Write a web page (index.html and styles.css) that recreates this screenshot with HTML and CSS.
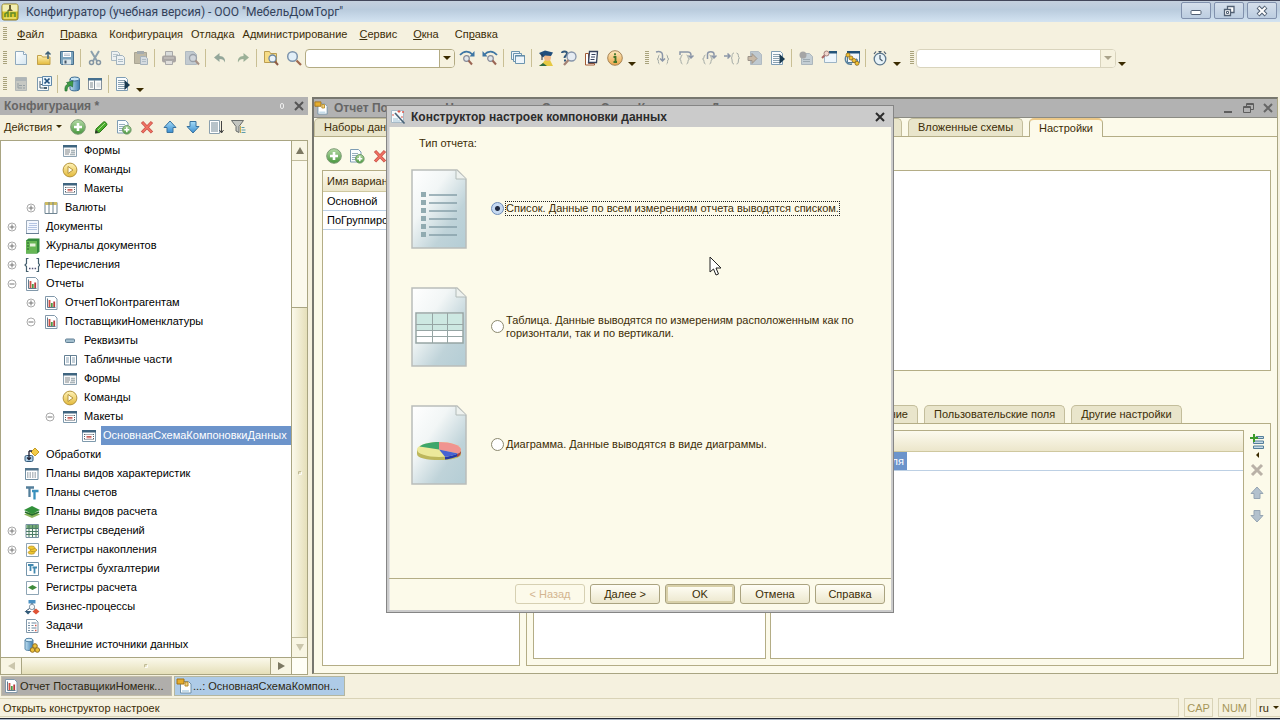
FILE: index.html
```html
<!DOCTYPE html>
<html lang="ru">
<head>
<meta charset="utf-8">
<title>Конфигуратор (учебная версия) - ООО "МебельДомТорг"</title>
<link rel="stylesheet" href="styles.css">
</head>
<body>
<svg class="defs" aria-hidden="true">
<defs>
<linearGradient id="gSheet" x1="0" y1="0" x2="1" y2="1"><stop offset="0" stop-color="#fff"/><stop offset=".35" stop-color="#f2f6f6"/><stop offset=".7" stop-color="#bfd3d9"/><stop offset="1" stop-color="#b4cdd5"/></linearGradient>
<linearGradient id="gPage" x1="0" y1="0" x2="1" y2="1"><stop offset="0" stop-color="#fff"/><stop offset="1" stop-color="#d5e6f0"/></linearGradient>
<linearGradient id="gGreen" x1="0" y1="0" x2="0" y2="1"><stop offset="0" stop-color="#b7dca8"/><stop offset="1" stop-color="#46963c"/></linearGradient>
<linearGradient id="gGold" x1="0" y1="0" x2="0" y2="1"><stop offset="0" stop-color="#fff3b8"/><stop offset="1" stop-color="#e3b93a"/></linearGradient>
<linearGradient id="gOrange" x1="0" y1="0" x2="0" y2="1"><stop offset="0" stop-color="#ffeac0"/><stop offset="1" stop-color="#e9a548"/></linearGradient>
<linearGradient id="gBlue" x1="0" y1="0" x2="0" y2="1"><stop offset="0" stop-color="#a5dcf8"/><stop offset="1" stop-color="#3c8fd0"/></linearGradient>
<linearGradient id="gCyl" x1="0" y1="0" x2="1" y2="0"><stop offset="0" stop-color="#bfe0f2"/><stop offset="1" stop-color="#3d7cae"/></linearGradient>
</defs>
<symbol id="page" viewBox="0 0 16 16"><path d="M2.500 1.500h8l3 3v10h-11z" fill="url(#gPage)" stroke="#8fa9bd"/><path d="M10.500 1.500v3h3" fill="#fff" stroke="#8fa9bd"/></symbol>
<symbol id="open" viewBox="0 0 16 16"><path d="M1.500 5.500h4l1 1.500h7.500v7.500h-12.500z" fill="url(#gGold)" stroke="#c2a14a"/><path d="M12 9V2M9.500 4.500L12 2l2.500 2.500" fill="none" stroke="#3d6179" stroke-width="1.500"/></symbol>
<symbol id="save" viewBox="0 0 16 16"><path d="M1.500 1.500h13v13h-12l-1-1z" fill="#7ba4be" stroke="#486f8c"/><path d="M4 2h8v5H4z" fill="#fff"/><path d="M5 4h6M5 5.500h6" stroke="#9ab" stroke-width=".7"/><path d="M4 9.500h8v5H4z" fill="#dce7ec"/><path d="M5.500 10.500h2v3h-2z" fill="#456"/></symbol>
<symbol id="cut" viewBox="0 0 16 16"><path d="M4 1l6 10M12 1L6 11" stroke="#8ca0ad" stroke-width="2"/><circle cx="4.500" cy="12.500" r="2" fill="none" stroke="#8495a2" stroke-width="1.500"/><circle cx="11.500" cy="12.500" r="2" fill="none" stroke="#8495a2" stroke-width="1.500"/></symbol>
<symbol id="copy" viewBox="0 0 16 16"><path d="M1.500 1.500h6l2 2v7h-8z" fill="#edf1f2" stroke="#a9b8c2"/><path d="M3 4.500h5M3 6.500h5" stroke="#b9c6cd"/><path d="M6.500 5.500h6l2 2v7h-8z" fill="#edf1f2" stroke="#a1b2bd"/><path d="M8 9.500h5M8 11.500h5" stroke="#adbdc6"/></symbol>
<symbol id="paste" viewBox="0 0 16 16"><path d="M1.500 2.500h12v11h-12z" fill="#bfb9a5" stroke="#a9a594"/><path d="M4 1h7v3H4z" fill="#a4abae"/><path d="M7.500 6.500h5l2 2v6h-7z" fill="#d5dbe0" stroke="#a5b2bc"/><path d="M9 9.500h4M9 11.500h4" stroke="#afbcc5"/></symbol>
<symbol id="print" viewBox="0 0 16 16"><path d="M4.500 1.500h7v5h-7z" fill="#d9dcdb" stroke="#a9a9a9"/><rect x="1" y="5.500" width="14" height="7" rx="2" fill="#a9a5a3"/><path d="M3 8h10" stroke="#d0ccc8"/><path d="M4.500 10.500h7v4h-7z" fill="#e0dedb" stroke="#a9a9a9"/></symbol>
<symbol id="preview" viewBox="0 0 16 16"><path d="M1.500 1.500h8l3 3v10h-11z" fill="#c2cad0" stroke="#b0bac1"/><circle cx="9" cy="8" r="3.500" fill="#cfd4da" stroke="#9aa0a8" stroke-width="1.300"/><path d="M11.500 10.500l3.500 4" stroke="#a79287" stroke-width="2"/></symbol>
<symbol id="undo" viewBox="0 0 16 16"><path d="M2 7.500L7.500 3v3c4.500 0 6 3 5.500 6.500-1-2.500-2.500-3.500-5.500-3.500v3z" fill="#94a79a"/></symbol>
<symbol id="redo" viewBox="0 0 16 16"><path d="M14 7.500L8.500 3v3C4 6 2.500 9 3 12.500 4 10 5.500 9 8.500 9v3z" fill="#9bb097"/></symbol>
<symbol id="ffind" viewBox="0 0 16 16"><path d="M1.500 1.500h5l1 2h6v9h-12z" fill="#f6dc86" stroke="#bb9d50"/><circle cx="9.500" cy="8.500" r="3.500" fill="#e9f3fa" stroke="#6d87a3" stroke-width="1.300"/><path d="M12 11.500l3 3.500" stroke="#8e5b45" stroke-width="2"/></symbol>
<symbol id="zoom" viewBox="0 0 16 16"><circle cx="6.500" cy="6.500" r="4.800" fill="#e2eff8" stroke="#7c93ab" stroke-width="1.500"/><path d="M10.500 10.500l4.500 4.500" stroke="#a06a50" stroke-width="2.300"/></symbol>
<symbol id="fnext" viewBox="0 0 16 16"><path d="M1 5c4-4.500 9-4.500 12.500-.5" fill="none" stroke="#3e76a4" stroke-width="1.800"/><path d="M15.500 1v5.500h-5z" fill="#3e76a4"/><circle cx="7.500" cy="8.500" r="2.800" fill="#e0e6ea" stroke="#868a98" stroke-width="1.200"/><path d="M9.500 10.500l3.500 4" stroke="#9b6654" stroke-width="2"/></symbol>
<symbol id="fprev" viewBox="0 0 16 16"><path d="M15 5C11 .5 6 .5 2.500 4.500" fill="none" stroke="#3e76a4" stroke-width="1.800"/><path d="M.5 1v5.500h5z" fill="#3e76a4"/><circle cx="8.500" cy="8.500" r="2.800" fill="#e0e6ea" stroke="#868a98" stroke-width="1.200"/><path d="M10.500 10.500l3.500 4" stroke="#9b6654" stroke-width="2"/></symbol>
<symbol id="wins" viewBox="0 0 16 16"><g fill="#eef5fa" stroke="#6d95af"><path d="M1.500 1.500h8v8h-8z"/><path d="M3.500 3.500h8v8h-8z"/><path d="M5.500 5.500h9v8h-9z"/></g><path d="M5 6h10" stroke="#54819f"/></symbol>
<symbol id="student" viewBox="0 0 16 16"><path d="M4 14l3-4h5l3 6H1z" fill="#e6c944"/><path d="M1 16l4-3 4 3z" fill="#2d6a44"/><circle cx="9.500" cy="7.500" r="3.500" fill="#f0b98a"/><path d="M1 3l6-2.500 8 2-2 3.500-6-.5-2 2z" fill="#214e7c"/><path d="M4 4v6" stroke="#2b3040"/></symbol>
<symbol id="hfind" viewBox="0 0 16 16"><path d="M1 3c0-2 5-2.500 5 .5 0 2-2.500 2-2.500 4.500" fill="none" stroke="#345a7d" stroke-width="2"/><path d="M3 9.500h2v2H3z" fill="#345a7d"/><circle cx="10.500" cy="6.500" r="4.500" fill="#e6ecf2" stroke="#8795aa" stroke-width="1.300"/><path d="M7.500 10l-4.500 5" stroke="#a58375" stroke-width="2.300"/></symbol>
<symbol id="book" viewBox="0 0 16 16"><path d="M1.500 3.500h3v10h6v1.500h-9z" fill="#fff" stroke="#a35b35"/><path d="M5.500 1.500h8l-1 11h-8z" fill="#f9fbff" stroke="#35415c" stroke-width="1.300"/><path d="M7.500 4.500h4M7 7h4M6.500 9.500h4" stroke="#35415c"/></symbol>
<symbol id="info" viewBox="0 0 16 16"><circle cx="8" cy="8" r="7.300" fill="url(#gOrange)" stroke="#a58456"/><path d="M8 3.200v2M6.500 7h2v4.500M6.500 12h3.500" stroke="#3f7428" stroke-width="1.800" fill="none"/></symbol>
<symbol id="brIn" viewBox="0 0 16 16"><path d="M4.500 5c-2 0 0 4-2.500 4 2.500 0 .5 5 2.500 5M11.500 5c2 0 0 4 2.500 4-2.500 0-.5 5-2.500 5" fill="none" stroke="#a4aba6"/><path d="M1 2c4-1 6.500 0 6.500 3v6M5 8.500L7.500 11 10 8.500" fill="none" stroke="#8b96a8" stroke-width="1.500"/></symbol>
<symbol id="brOver" viewBox="0 0 16 16"><path d="M4.500 5C2 5 4 9 1.500 9 4 9 2 14 4.500 14M8.500 5c2.500 0 .5 4 3 4-2.500 0-.5 5-3 5" fill="none" stroke="#a4aba6"/><path d="M2 5V2h8c3 0 3 2 3 5M10.500 5.500L13 8l2.500-2.500" fill="none" stroke="#8b96a8" stroke-width="1.500"/></symbol>
<symbol id="brOut" viewBox="0 0 16 16"><path d="M4.500 5C2 5 4 9 1.500 9 4 9 2 14 4.500 14M8.500 5c2.500 0 .5 4 3 4-2.500 0-.5 5-3 5" fill="none" stroke="#a4aba6"/><path d="M6.500 9V4c0-3 6.500-3 6.500 0v4M10.500 5.500L13 8l2.500-2.500" fill="none" stroke="#8b96a8" stroke-width="1.500"/></symbol>
<symbol id="brTo" viewBox="0 0 16 16"><path d="M10 3C7 3 9 8 7 8c2 0 0 6 3 6M12.500 3c3 0 1 5 3 5-2 0 0 6-3 6" fill="none" stroke="#a4aba6"/><path d="M0 6h5.500M3.500 3.500L6 6 3.500 8.500" fill="none" stroke="#8b96a8" stroke-width="1.500"/></symbol>
<symbol id="goPage" viewBox="0 0 16 16"><path d="M3.500 1.500h8l3 3v10h-11z" fill="#bfc9d0" stroke="#b1bbc2"/><path d="M1 6.500h4V3.500l5 5-5 5v-3H1z" fill="#c7b8a5" stroke="#9d948a"/></symbol>
<symbol id="run" viewBox="0 0 16 16"><path d="M1.500 1.500h9l2 2v11h-11z" fill="#fafcfe" stroke="#7e9db4"/><path d="M3 4.500h7M3 6.500h7M3 8.500h6M3 10.500h7M3 12.500h7" stroke="#8ba2b1"/><path d="M9.500 4l5.500 5-5.500 5z" fill="#193a50"/></symbol>
<symbol id="gear" viewBox="0 0 16 16"><path d="M3.500 3.500h8l3 3v8h-11z" fill="#c4ced4" stroke="#acb6bc"/><path d="M5 9.500h7M5 11.500h7" stroke="#9daab2"/><circle cx="5" cy="5" r="3.500" fill="#a5a5a5"/></symbol>
<symbol id="shot" viewBox="0 0 16 16"><path d="M3.500 2.500h12v10h-12z" fill="#eef6fc" stroke="#9db4c5"/><path d="M8 1h8v2.500H8z" fill="#24557a"/><circle cx="5.500" cy="3.500" r="2.500" fill="#f0d5cd" stroke="#a5847c"/><path d="M3.500 5.500L1 8" stroke="#a66" stroke-width="2"/></symbol>
<symbol id="cfg" viewBox="0 0 16 16"><path d="M3.500 1.500h12v11h-12z" fill="#f2f8fb" stroke="#547c9b"/><path d="M3 1h13v2.500H3z" fill="#1f5078"/><path d="M2 6c-2 5 1 9 6 8M12 9c2 1 2 4 0 6" fill="none" stroke="#56819e" stroke-width="1.500"/><g fill="#f2c232" stroke="#8b6a20" stroke-width=".8"><circle cx="4" cy="5" r="2"/><circle cx="7" cy="8" r="2"/><circle cx="10" cy="10.500" r="2"/><circle cx="13" cy="13.300" r="2"/></g></symbol>
<symbol id="clock" viewBox="0 0 16 16"><circle cx="8" cy="9" r="5.800" fill="#e8f3f8" stroke="#5d788e" stroke-width="1.300"/><path d="M8 5v4l2.500 2M6.500 1.500h3M8 1v2.500M2 4l2-2.500M14 4l-2-2.500" fill="none" stroke="#46596a" stroke-width="1.200"/></symbol>
<symbol id="cfgOpen" viewBox="0 0 16 16"><path d="M2.500 1.500h11v13h-11z" fill="#c6c8c3" stroke="#b2b8b8"/><path d="M3 2h10v3H3z" fill="#aeb5b7"/><path d="M5 7v5h4M6 9.500h3M10 9.500h2M10 12h2" stroke="#959fa3" fill="none"/></symbol>
<symbol id="cfgClose" viewBox="0 0 16 16"><path d="M1.500 1.500h11v13h-11z" fill="#f8fafa" stroke="#7d9ab0"/><path d="M4 5v7h4M4.500 8.500H8" stroke="#475f70" fill="none"/><path d="M6.500.5h9v9h-9z" fill="#e9f4fb" stroke="#6088aa"/><path d="M8.500 2.500l5 5M13.500 2.500l-5 5" stroke="#1f4e7c" stroke-width="1.700"/><path d="M8 12h3" stroke="#475f70" stroke-width="2"/></symbol>
<symbol id="dbUp" viewBox="0 0 16 16"><path d="M6 3v10c0 2.500 9.500 2.500 9.500 0V3z" fill="url(#gCyl)" stroke="#3b6b92"/><ellipse cx="10.750" cy="3" rx="4.750" ry="2" fill="#c8e5f4" stroke="#3b6b92"/><path d="M1 15c-.5-4 .5-6 3-7L2.500 6.500 9 5l-.5 6-2-1.500C4 10 3 12 3 15z" fill="#3e9b46" stroke="#1d6428" stroke-width=".6"/></symbol>
<symbol id="formw" viewBox="0 0 16 16"><path d="M1.500 2.500h13v11h-13z" fill="#fdfdfb" stroke="#84909a"/><path d="M1 2h14v2.500H1z" fill="#46708e"/><path d="M7.500 4v9.500" stroke="#84909a"/><path d="M3 7h3M3 9h3M3 11h3" stroke="#7e8b92"/><path d="M9.500 6.500h4v5h-4z" fill="#dfe3e4"/></symbol>
<symbol id="add" viewBox="0 0 16 16"><circle cx="8" cy="8" r="7.300" fill="url(#gGreen)" stroke="#7d9b76"/><path d="M8 4v8M4 8h8" stroke="#fff" stroke-width="2.600"/></symbol>
<symbol id="pencil" viewBox="0 0 16 16"><path d="M3 10l7.500-7c1.500-1 4.500 2 3 3.500L6.500 13.500 2.500 14z" fill="#49ad2c" stroke="#2b7818"/><path d="M5 11l7-7" stroke="#a6dd86"/><path d="M2 14.500l1-3.500 2.500 2.500z" fill="#333"/></symbol>
<symbol id="addPage" viewBox="0 0 16 16"><path d="M1.500 1.500h8l2.500 2.500v10h-10.500z" fill="#fafdff" stroke="#7e9db4"/><path d="M3 5.500h6M3 7.500h5M3 9.500h4M3 11.500h3" stroke="#96aebd"/><circle cx="10.800" cy="10.800" r="4.300" fill="url(#gGreen)" stroke="#6b9864"/><path d="M10.800 8.300v5M8.300 10.800h5" stroke="#fff" stroke-width="1.600"/></symbol>
<symbol id="del" viewBox="0 0 16 16"><path d="M3 3l10 10.500M13 3L3 13.500" stroke="#c9534b" stroke-width="3.200"/><path d="M3.500 3.500l9 9.500M12.500 3.500l-9 9.500" stroke="#f17363" stroke-width="1.700"/></symbol>
<symbol id="up" viewBox="0 0 16 16"><path d="M8 2l6 6.500h-3v5H5v-5H2z" fill="url(#gBlue)" stroke="#39739f"/></symbol>
<symbol id="down" viewBox="0 0 16 16"><path d="M8 14l6-6.500h-3v-5H5v5H2z" fill="url(#gBlue)" stroke="#39739f"/></symbol>
<symbol id="sort" viewBox="0 0 16 16"><path d="M1.500 1.500h10v13h-10z" fill="#fff" stroke="#8ba0ae"/><path d="M3 4h7M3 6h7M3 8h7M3 10h7M3 12h7" stroke="#738895"/><path d="M13.500 2v12M11.500 11l2 3 2-3" fill="none" stroke="#444"/></symbol>
<symbol id="filter" viewBox="0 0 16 16"><path d="M.5 1.500h12L8 7.500v6L5 12V7.500z" fill="#c3c5c0" stroke="#696d6c"/><path d="M10.500 8.500h3M10.500 11h4M10.500 13.500h4" stroke="#5b9cae"/><path d="M9.500 7v7" stroke="#c8ae50"/></symbol>
<symbol id="form" viewBox="0 0 16 16"><path d="M1.500 2.500h13v11h-13z" fill="#f8f8f8" stroke="#8ca2b2"/><path d="M1 2h14v2.500H1z" fill="#3f6580"/><path d="M3 7h5M3 9h5M3 11h4" stroke="#83898c"/><path d="M9 7.500h4M9 9.500h4M8 11.500h5" stroke="#a9b4b9" stroke-width="1.500"/></symbol>
<symbol id="cmd" viewBox="0 0 16 16"><circle cx="8" cy="8" r="6.900" fill="url(#gGold)" stroke="#b5953f"/><path d="M6 4.500v7l5-3.500z" fill="#fffdf0" stroke="#b5953f"/></symbol>
<symbol id="maket" viewBox="0 0 16 16"><path d="M1.500 2.500h13v11h-13z" fill="#fff" stroke="#7f9aad"/><path d="M1 2h14v2.500H1z" fill="#3f6580"/><path d="M3.500 6v1M3.500 8v1M3.500 10v1.500M12.500 6v1M12.500 8v1M12.500 10v1.500M4.500 6.500h1M6.500 6.500h1M8.500 6.500h1M10.500 6.500h1M4.500 11.500h1M6.500 11.500h1M8.500 11.500h1M10.500 11.500h1" stroke="#59636c"/><path d="M5.500 8.500h5M5.500 9.800h5" stroke="#c9605a"/></symbol>
<symbol id="cols" viewBox="0 0 16 16"><path d="M2 2.500h12v11H2z" fill="#fff" stroke="#6f8492"/><path d="M2 2h12v3H2z" fill="#cdbb62"/><path d="M6 2v12M10 2v12" stroke="#6f8492"/></symbol>
<symbol id="doc" viewBox="0 0 16 16"><path d="M2.500 1.500h12v13h-12z" fill="#f4f8ff" stroke="#9eacbc"/><path d="M5 4.500h8M5 6.500h8M4 8.500h9M4 10.500h9" stroke="#b4c5e3"/><path d="M2 14.500h13" stroke="#667d94"/></symbol>
<symbol id="journal" viewBox="0 0 16 16"><path d="M2 2.500L4.500.5h11v13l-2 2H2z" fill="#338a3d"/><path d="M2 3h11v12.500H2z" fill="#66b654"/><path d="M6 5.500h5.500v3H6z" fill="#e4f3dc"/><path d="M3 5h2M3 8h2M3 11h2" stroke="#25632c"/></symbol>
<symbol id="enum" viewBox="0 0 16 16"><path d="M4.500 1.500h-2v5L1 8l1.500 1.500v5h2M12.500 1.500h2v5L16 8l-1.500 1.500v5h-2" fill="none" stroke="#45606f" stroke-width="1.200"/><path d="M5 11.500h1.500M7.800 11.500h1.500M10.600 11.500h1.500" stroke="#557" stroke-width="1.500"/></symbol>
<symbol id="report" viewBox="0 0 16 16"><path d="M2.500 1.500h9l2.500 2.500v10.500h-11.500z" fill="#fff" stroke="#8299ab"/><path d="M4.500 3.500v9h8" fill="none" stroke="#627b8d"/><path d="M6.500 12V5" stroke="#cf5145" stroke-width="1.800"/><path d="M8.800 12V8" stroke="#4a9c46" stroke-width="1.800"/><path d="M11.200 12V6.500" stroke="#b83b3b" stroke-width="1.800"/></symbol>
<symbol id="attr" viewBox="0 0 16 16"><rect x="3.500" y="6" width="9" height="3.500" rx="1" fill="#a3bfce" stroke="#607f94"/></symbol>
<symbol id="tabl" viewBox="0 0 16 16"><path d="M2.500 3.500h12v9.500h-12zM8.500 3.500v9.500" fill="#fff" stroke="#637f93"/><path d="M4 6h3M4 8h3M4 10h3M10 6h3M10 8h3M10 10h3" stroke="#8ba3b5"/></symbol>
<symbol id="proc" viewBox="0 0 16 16"><path d="M11 1l4 4-4 4-4-4z" fill="#f3cb47" stroke="#c39b26"/><rect x="1" y="8.500" width="8" height="6" rx="1.500" fill="#afd0e8" stroke="#345b7b"/><path d="M5 4v8M3 10.500l2 2 2-2M5 4h3" fill="none" stroke="#223" stroke-width="1.300"/></symbol>
<symbol id="chars" viewBox="0 0 16 16"><path d="M1.500 2.500h12.500v11H1.500z" fill="#fff" stroke="#6f8da1"/><path d="M1 2h13.500v2.500H1z" fill="#52748c"/><path d="M3 7h10M3 9h10M3 11h10" stroke="#6f7d87" stroke-dasharray="1.500 1"/></symbol>
<symbol id="acc" viewBox="0 0 16 16"><path d="M2 2.500h8M5.500 2.500V12" stroke="#547f9b" stroke-width="2.300"/><path d="M8 6h6.500M10.500 6v8.500" stroke="#3a91bd" stroke-width="2.300"/></symbol>
<symbol id="calc" viewBox="0 0 16 16"><path d="M0 10.500l8-3.500 8 3.500-8 3.500z" fill="#8db55e"/><path d="M0 6l8-4 8 4-8 4z" fill="#31903a"/><path d="M1 8l7 3 7-3" fill="none" stroke="#246c2c" stroke-width="1.500"/></symbol>
<symbol id="regs" viewBox="0 0 16 16"><path d="M2 1.500h12.500v13H2z" fill="#f6fbf5" stroke="#7690a1"/><path d="M2.500 2h12v3h-12z" fill="#75aa76"/><path d="M5 2v12M8.500 2v12M12 2v12M2 5.500h12M2 8.500h12M2 11.500h12" stroke="#4c7c66"/></symbol>
<symbol id="regn" viewBox="0 0 16 16"><path d="M2.500 1.500h12v13h-12z" fill="#fff" stroke="#8ea5b5"/><g fill="#efc832" stroke="#b28c23" stroke-width=".7"><ellipse cx="7.500" cy="10.500" rx="3.300" ry="1.700"/><ellipse cx="9.500" cy="8" rx="3.300" ry="1.700"/><ellipse cx="7.500" cy="5.700" rx="3.300" ry="1.700"/></g></symbol>
<symbol id="regb" viewBox="0 0 16 16"><path d="M2.500 1.500h12v13h-12z" fill="#fff" stroke="#7696ac"/><path d="M4 4h5.500M6.500 4v6M8.500 6.500H13M10.500 6.500v6" stroke="#4088ae" stroke-width="1.800"/></symbol>
<symbol id="regr" viewBox="0 0 16 16"><path d="M2.500 1.500h12v13h-12z" fill="#fff" stroke="#8ea5b5"/><path d="M4 7.500l4.500-2.500L13 7.500 8.500 10z" fill="#3e8b3c"/></symbol>
<symbol id="biz" viewBox="0 0 16 16"><path d="M4.500 1h7v3.500h-7z" fill="#4b91c3"/><path d="M8 4v3" stroke="#36516b"/><circle cx="8" cy="8" r="2.700" fill="#f4f7f9" stroke="#8f9fae"/><path d="M5.500 9.500L2 12M10 9.500l2 2" stroke="#36516b"/><path d="M.5 12h7L4 15.500z" fill="#325a78"/><path d="M12 9.500l3.500 3-3.500 3-3.500-3z" fill="#df5336"/></symbol>
<symbol id="task" viewBox="0 0 16 16"><path d="M2.500 1.500h9l2.500 2.500v10.500h-11.500z" fill="#fff" stroke="#8299ab"/><path d="M4 5h2M7.500 5h5M4 7.500h2M7.500 7.500h2M4 10h2M7.500 10h5M4 12.500h2M7.500 12.500h2" stroke="#6d88a0" stroke-width="1.100"/><path d="M11 7.500h1.500M11 12.500h1.500" stroke="#d65a4c" stroke-width="1.500"/></symbol>
<symbol id="ext" viewBox="0 0 16 16"><path d="M1 3v9c0 2 8 2 8 0V3z" fill="url(#gCyl)" stroke="#5886a8"/><ellipse cx="5" cy="3" rx="4" ry="1.700" fill="#d5edf8" stroke="#5886a8"/><g fill="#edc13b" stroke="#93701e"><circle cx="11" cy="9" r="2.300"/><circle cx="8.500" cy="13" r="2.300"/><circle cx="13.300" cy="13" r="2.300"/></g></symbol>
<symbol id="plus" viewBox="0 0 10 10"><circle cx="5" cy="5" r="4" fill="#fff" stroke="#aaa"/><path d="M2.500 5h5M5 2.500v5" stroke="#777"/></symbol>
<symbol id="minus" viewBox="0 0 10 10"><circle cx="5" cy="5" r="4" fill="#fff" stroke="#aaa"/><path d="M2.500 5h5" stroke="#777"/></symbol>
<symbol id="schema" viewBox="0 0 16 16"><path d="M4.500 3.500h8l2.500 2.500v9h-10.500z" fill="#fff" stroke="#6f90a8"/><path d="M6 12h7v2H6z" fill="#c5dcea"/><path d="M1 1h7v5H1z" fill="#e5ad2d" stroke="#a1731b"/><path d="M9 4h3v4H9z" fill="#f4d47b" stroke="#b5892c"/></symbol>
<symbol id="wand" viewBox="0 0 16 16"><path d="M1.500 1.500h12v12h-12z" fill="#f7fafc" stroke="#a8bac7"/><path d="M3 10h5M3 12h7" stroke="#9fc0d4"/><path d="M5 4l9.500 10.500" stroke="#4b6478" stroke-width="1.700"/><path d="M9 1v3M7.500 2.500h3M13 2v2M12 3h2M3 5v2M12 7v2" stroke="#e05a4c"/></symbol>
<symbol id="addRow" viewBox="0 0 16 16"><path d="M7 2.500h7.500v2H7zM4.500 7h10v2.500h-10zM4.500 12h10v2.500h-10z" fill="#c7dae6" stroke="#557f9b"/><path d="M5 0v8M1 4h8" stroke="#3c9b29" stroke-width="2"/></symbol>
<symbol id="delOff" viewBox="0 0 16 16"><path d="M3 3l10 10M13 3L3 13" stroke="#b9b1a7" stroke-width="3"/></symbol>
<symbol id="upOff" viewBox="0 0 16 16"><path d="M8 2l6 6.500h-3v5H5v-5H2z" fill="#b3c1cd" stroke="#96a5b3"/></symbol>
<symbol id="downOff" viewBox="0 0 16 16"><path d="M8 14l6-6.500h-3v-5H5v5H2z" fill="#b3c1cd" stroke="#96a5b3"/></symbol>
<symbol id="x" viewBox="0 0 10 10"><path d="M1 1l8 8M9 1L1 9" stroke="currentColor" stroke-width="2"/></symbol>
<symbol id="sheet" viewBox="0 0 56 80"><path d="M1 1h45l9 9v69H1z" fill="url(#gSheet)" stroke="#b9bdba" stroke-width="1.500"/><path d="M45 1v9h10" fill="#eef2ef" stroke="#b2bbb9"/></symbol>
</svg>

<header class="titlebar">
  <svg class="logo" viewBox="0 0 18 18"><rect x="1" y="1" width="16" height="16" rx="2" fill="#d9c527" stroke="#84752a"/><path d="M1.500 1.500h15v7h-15z" fill="#f3eeb4"/><path d="M8 2h2v4l2 2H6l2-2z" fill="#685f34"/><path d="M4 14.500V11l3-2v5.500M10 14v-4h4v4" fill="none" stroke="#5d8b2d" stroke-width="1.500"/><path d="M3 15h12" stroke="#f6ef9a"/></svg>
  <h1>Конфигуратор (учебная версия) - ООО "МебельДомТорг"</h1>
  <div class="wctl">
    <button aria-label="Свернуть"><svg viewBox="0 0 12 12"><rect x="1" y="5.500" width="10" height="4" rx="1" fill="#fff" stroke="#526073"/></svg></button>
    <button aria-label="Восстановить"><svg viewBox="0 0 12 12"><path d="M4.500 1.500h6.500v6H4.500z" fill="#fff" stroke="#526073" stroke-width="1.300"/><path d="M1.500 4.500h6v6h-6z" fill="#fff" stroke="#526073" stroke-width="1.300"/><path d="M3.500 6.500h2v2h-2z" fill="none" stroke="#526073"/></svg></button>
    <button aria-label="Закрыть"><svg viewBox="0 0 12 12"><path d="M2 2l8 8M10 2l-8 8" stroke="#526073" stroke-width="4"/><path d="M2.500 2.500l7 7M9.500 2.500l-7 7" stroke="#fff" stroke-width="2"/></svg></button>
  </div>
</header>

<nav class="menu">
  <span class="grip"></span>
  <button><u>Ф</u>айл</button><button><u>П</u>равка</button><button class="tight">Конфигурация</button><button class="tight">Отладка</button><button class="tight">Администрирование</button><button><u>С</u>ервис</button><button><u>О</u>кна</button><button>Сп<u>р</u>авка</button>
</nav>

<div class="bar">
  <span class="grip"></span>
  <button aria-label="Новый"><svg><use href="#page"/></svg></button><button aria-label="Открыть"><svg><use href="#open"/></svg></button><button aria-label="Сохранить"><svg><use href="#save"/></svg></button>
  <i class="sep"></i>
  <button aria-label="Вырезать"><svg><use href="#cut"/></svg></button><button aria-label="Копировать"><svg><use href="#copy"/></svg></button><button aria-label="Вставить"><svg><use href="#paste"/></svg></button>
  <i class="sep"></i>
  <button aria-label="Печать"><svg><use href="#print"/></svg></button><button aria-label="Просмотр"><svg><use href="#preview"/></svg></button>
  <i class="sep"></i>
  <button aria-label="Отменить"><svg><use href="#undo"/></svg></button><button aria-label="Вернуть"><svg><use href="#redo"/></svg></button>
  <i class="sep"></i>
  <button aria-label="Глобальный поиск"><svg><use href="#ffind"/></svg></button><button aria-label="Найти"><svg><use href="#zoom"/></svg></button>
  <span class="combo"><input type="text" aria-label="Строка поиска"><button aria-label="Список"><b class="tri"></b></button></span>
  <button aria-label="Найти далее"><svg><use href="#fnext"/></svg></button><button aria-label="Найти ранее"><svg><use href="#fprev"/></svg></button>
  <i class="sep"></i>
  <button aria-label="Окна"><svg><use href="#wins"/></svg></button>
  <i class="sep"></i>
  <button aria-label="Обучение"><svg><use href="#student"/></svg></button><button aria-label="Поиск в справке"><svg><use href="#hfind"/></svg></button><button aria-label="Описание"><svg><use href="#book"/></svg></button><button aria-label="О программе"><svg><use href="#info"/></svg></button>
  <button class="more" aria-label="Ещё"><b class="tri"></b></button>
  <span class="grip next"></span>
  <button aria-label="Шагнуть в"><svg><use href="#brIn"/></svg></button><button aria-label="Шагнуть через"><svg><use href="#brOver"/></svg></button><button aria-label="Шагнуть из"><svg><use href="#brOut"/></svg></button><button aria-label="Идти до курсора"><svg><use href="#brTo"/></svg></button><button aria-label="Текущая строка"><svg><use href="#goPage"/></svg></button><button aria-label="Начать отладку"><svg><use href="#run"/></svg></button>
  <i class="sep"></i>
  <button aria-label="Вычислить"><svg><use href="#gear"/></svg></button><button aria-label="Табло"><svg><use href="#shot"/></svg></button><button aria-label="Стек вызовов"><svg><use href="#cfg"/></svg></button>
  <i class="sep"></i>
  <button aria-label="Замер"><svg><use href="#clock"/></svg></button>
  <button class="more" aria-label="Ещё"><b class="tri"></b></button>
  <span class="grip next"></span>
  <span class="combo wide"><input type="text" aria-label="Процедура"><button aria-label="Список"><b class="tri"></b></button></span>
  <button class="more" aria-label="Ещё"><b class="tri"></b></button>
</div>

<div class="bar second">
  <span class="grip"></span>
  <button aria-label="Открыть конфигурацию"><svg><use href="#cfgOpen"/></svg></button><button aria-label="Закрыть конфигурацию"><svg><use href="#cfgClose"/></svg></button>
  <i class="sep"></i>
  <button aria-label="Обновить базу"><svg><use href="#dbUp"/></svg></button><button aria-label="Окно конфигурации"><svg><use href="#formw"/></svg></button>
  <i class="sep"></i>
  <button aria-label="Запуск"><svg><use href="#run"/></svg></button>
  <button class="more" aria-label="Ещё"><b class="tri"></b></button>
</div>

<main class="work">
  <aside class="side">
    <div class="cap"><h2>Конфигурация *</h2><i class="pin"></i><button aria-label="Закрыть"><svg><use href="#x"/></svg></button></div>
    <div class="acts">
      <button class="drop">Действия<b class="tri"></b></button>
      <button aria-label="Добавить"><svg><use href="#add"/></svg></button><button aria-label="Изменить"><svg><use href="#pencil"/></svg></button><button aria-label="Скопировать"><svg><use href="#addPage"/></svg></button><button aria-label="Удалить"><svg><use href="#del"/></svg></button><button aria-label="Вверх"><svg><use href="#up"/></svg></button><button aria-label="Вниз"><svg><use href="#down"/></svg></button><button aria-label="Сортировка"><svg><use href="#sort"/></svg></button><button aria-label="Отбор"><svg><use href="#filter"/></svg></button>
    </div>
    <div class="treebox">
      <ul class="tree">
        <li class="l2"><i></i><svg><use href="#form"/></svg><span>Формы</span></li>
        <li class="l2"><i></i><svg><use href="#cmd"/></svg><span>Команды</span></li>
        <li class="l2"><i></i><svg><use href="#maket"/></svg><span>Макеты</span></li>
        <li class="l1"><i><svg><use href="#plus"/></svg></i><svg><use href="#cols"/></svg><span>Валюты</span></li>
        <li><i><svg><use href="#plus"/></svg></i><svg><use href="#doc"/></svg><span>Документы</span></li>
        <li><i><svg><use href="#plus"/></svg></i><svg><use href="#journal"/></svg><span>Журналы документов</span></li>
        <li><i><svg><use href="#plus"/></svg></i><svg><use href="#enum"/></svg><span>Перечисления</span></li>
        <li><i><svg><use href="#minus"/></svg></i><svg><use href="#report"/></svg><span>Отчеты</span></li>
        <li class="l1"><i><svg><use href="#plus"/></svg></i><svg><use href="#report"/></svg><span>ОтчетПоКонтрагентам</span></li>
        <li class="l1"><i><svg><use href="#minus"/></svg></i><svg><use href="#report"/></svg><span>ПоставщикиНоменклатуры</span></li>
        <li class="l2"><i></i><svg><use href="#attr"/></svg><span>Реквизиты</span></li>
        <li class="l2"><i></i><svg><use href="#tabl"/></svg><span>Табличные части</span></li>
        <li class="l2"><i></i><svg><use href="#form"/></svg><span>Формы</span></li>
        <li class="l2"><i></i><svg><use href="#cmd"/></svg><span>Команды</span></li>
        <li class="l2"><i><svg><use href="#minus"/></svg></i><svg><use href="#maket"/></svg><span>Макеты</span></li>
        <li class="l3"><i></i><svg><use href="#maket"/></svg><span class="sel">ОсновнаяСхемаКомпоновкиДанных</span></li>
        <li><i></i><svg><use href="#proc"/></svg><span>Обработки</span></li>
        <li><i></i><svg><use href="#chars"/></svg><span>Планы видов характеристик</span></li>
        <li><i></i><svg><use href="#acc"/></svg><span>Планы счетов</span></li>
        <li><i></i><svg><use href="#calc"/></svg><span>Планы видов расчета</span></li>
        <li><i><svg><use href="#plus"/></svg></i><svg><use href="#regs"/></svg><span>Регистры сведений</span></li>
        <li><i><svg><use href="#plus"/></svg></i><svg><use href="#regn"/></svg><span>Регистры накопления</span></li>
        <li><i></i><svg><use href="#regb"/></svg><span>Регистры бухгалтерии</span></li>
        <li><i></i><svg><use href="#regr"/></svg><span>Регистры расчета</span></li>
        <li><i></i><svg><use href="#biz"/></svg><span>Бизнес-процессы</span></li>
        <li><i></i><svg><use href="#task"/></svg><span>Задачи</span></li>
        <li><i></i><svg><use href="#ext"/></svg><span>Внешние источники данных</span></li>
      </ul>
      <div class="vs"><button class="sb" aria-label="Вверх"><b class="arr u"></b></button><div class="vthumb"><i></i></div><button class="sb off" aria-label="Вниз"><b class="arr d"></b></button></div>
      <div class="hs"><button class="sb off" aria-label="Влево"><b class="arr l"></b></button><div class="hthumb"><i></i></div><button class="sb" aria-label="Вправо"><b class="arr r"></b></button></div>
      <div class="corner"></div>
    </div>
  </aside>

  <section class="mdi">
    <div class="mcap"><svg><use href="#schema"/></svg><h2>Отчет ПоставщикиНоменклатуры: ОсновнаяСхемаКомпоновкиДанных</h2>
      <button aria-label="Свернуть"><svg viewBox="0 0 12 12"><path d="M2 10h8" stroke="#5e5e5e" stroke-width="2"/></svg></button>
      <button aria-label="Восстановить"><svg viewBox="0 0 12 12"><path d="M4.500 4V1.500h7v6H8.500M1.500 4.500h7v6h-7zM1 5.500h8M4 2.500h8" fill="none" stroke="#5e5e5e"/></svg></button>
      <button aria-label="Закрыть"><svg class="mx"><use href="#x"/></svg></button>
    </div>
    <div class="tabs"><button class="first">Наборы данных</button><button>Вложенные схемы</button><button class="on">Настройки</button></div>
    <div class="mbody">
      <div class="variants">
        <div class="vbtns"><button aria-label="Добавить"><svg><use href="#add"/></svg></button><button aria-label="Скопировать"><svg><use href="#addPage"/></svg></button><button aria-label="Удалить"><svg><use href="#del"/></svg></button></div>
        <div class="box grow">
          <table class="grid"><thead><tr><th>Имя варианта</th></tr></thead><tbody><tr><td>Основной</td></tr><tr><td>ПоГруппировкам</td></tr></tbody></table>
        </div>
      </div>
      <div class="settings">
        <div class="box upper"></div>
        <div class="tabs low"><button class="first"><span>Условное оформление</span></button><button>Пользовательские поля</button><button>Другие настройки</button></div>
        <div class="group">
          <div class="box struct"></div>
          <div class="box fields"><table class="grid"><thead><tr><th></th></tr></thead><tbody><tr><td><span class="chip">Автополя</span></td></tr></tbody></table></div>
          <div class="vbar"><button aria-label="Добавить поле"><svg><use href="#addRow"/></svg></button><b class="arr tiny"></b><button aria-label="Удалить"><svg><use href="#delOff"/></svg></button><button aria-label="Вверх"><svg><use href="#upOff"/></svg></button><button aria-label="Вниз"><svg><use href="#downOff"/></svg></button></div>
        </div>
      </div>
    </div>
  </section>
</main>

<div class="wintabs"><button><svg><use href="#report"/></svg>Отчет ПоставщикиНоменк...</button><button class="cur"><svg><use href="#schema"/></svg>...: ОсновнаяСхемаКомпон...</button></div>
<footer class="status"><span class="msg">Открыть конструктор настроек</span><span class="ind">CAP</span><span class="ind">NUM</span><button class="lang">ru<b class="tri"></b></button></footer>
<div class="edge"></div>

<div class="overlay">
  <form class="dialog">
    <div class="dcap"><svg><use href="#wand"/></svg><h2>Конструктор настроек компоновки данных</h2><button type="button" aria-label="Закрыть"><svg><use href="#x"/></svg></button></div>
    <fieldset>
      <legend>Тип отчета:</legend>
      <div class="opt"><svg viewBox="0 0 56 80"><use href="#sheet"/><g fill="#91abb1"><path d="M10 23h5v5h-5zM10 31h5v5h-5zM10 39h5v5h-5zM10 47h5v5h-5zM10 55h5v5h-5zM10 63h5v5h-5z"/></g><path d="M18 26h28M18 34h28M18 42h28M18 50h28M18 58h28M18 66h28" stroke="#87a0a9" stroke-width="1.500"/></svg><input type="radio" name="kind" id="k1" checked><label for="k1" class="foc">Список. Данные по всем измерениям отчета выводятся списком.</label></div>
      <div class="opt"><svg viewBox="0 0 56 80"><use href="#sheet"/><path d="M5 26h47v30H5z" fill="#fff" stroke="#96a5a4" stroke-width="1.500"/><path d="M6 27h45v16H6z" fill="#cde8e2"/><path d="M21.500 26v30M36.500 26v30M5 37.500h47M5 43.500h47M5 49.500h47" stroke="#96a5a4"/></svg><input type="radio" name="kind" id="k2"><label for="k2">Таблица. Данные выводятся по измерениям расположенным как по горизонтали, так и по вертикали.</label></div>
      <div class="opt"><svg viewBox="0 0 56 80"><use href="#sheet"/><path d="M6 45v4c0 4 10 6 22 6s22-2 22-6v-4z" fill="#bdb75c"/><path d="M34 48v6.500c7-.8 11-2.500 13-3.500v-5z" fill="#2339a5"/><path d="M46 49v3c3-1 4-3 4-6z" fill="#a84545"/><ellipse cx="28" cy="44.500" rx="22" ry="7.500" fill="#ece99b"/><path d="M28 44.500V37c12 0 22 3.500 22 7.500 0 1.500-1 3-3 4z" fill="#f09490"/><path d="M28 44.500V37c-8 0-16 1.500-19.500 4.500z" fill="#3da66b"/><path d="M28 44.500l6 7.200c6-.5 10-1.700 13-3.200z" fill="#4763d3"/></svg><input type="radio" name="kind" id="k3"><label for="k3">Диаграмма. Данные выводятся в виде диаграммы.</label></div>
    </fieldset>
    <div class="foot"><button type="button" disabled>&lt; Назад</button><button type="button">Далее &gt;</button><button type="button" class="def">OK</button><button type="button">Отмена</button><button type="button">Справка</button></div>
    <svg class="cursor" viewBox="0 0 13 20"><path d="M1 1v15l3.500-3 2.500 6 2.500-1-2.500-6h5z" fill="#fff" stroke="#222"/></svg>
  </form>
</div>
</body>
</html>
```
FILE: styles.css
```css
* { box-sizing: border-box; }
html, body { height: 100%; }
body {
  margin: 0;
  min-height: 100vh;
  display: flex;
  flex-direction: column;
  background: #f5f1df;
  color: #3c2d06;
  font: 11px/16px "Liberation Sans", Arial, sans-serif;
  overflow: hidden;
  position: relative;
}
button, input { font: inherit; color: inherit; margin: 0; }
button { background: none; border: 0; padding: 0; white-space: nowrap; }
h1, h2 { margin: 0; font-size: 12px; white-space: nowrap; }
svg { width: 16px; height: 16px; flex: none; display: block; }
.defs { position: absolute; width: 0; height: 0; }
table { border-collapse: collapse; width: 100%; }

.tri { display: inline-block; border: 4px solid transparent; border-top-color: #3a2b00; border-bottom: 0; flex: none; }

.titlebar {
  flex: none; height: 22px; display: flex; align-items: center; gap: 7px;
  padding: 0 3px 0 1px; border-top: 1px solid #42465a;
  background: linear-gradient(#c5d0de, #b9cbdd 40%, #d3e3f1);
}
.logo { width: 18px; height: 18px; }
.titlebar h1 { flex: 1; font: 12px/18px Roboto, "Noto Sans", sans-serif; color: #33415a; }
.wctl { display: flex; gap: 3px; align-self: flex-start; padding-top: 1px; }
.wctl button { width: 30px; height: 17px; display: grid; place-items: center; border: 1px solid #8191ad; border-radius: 2px; background: linear-gradient(#d5dfeb, #bccde0); }
.wctl svg { width: 12px; height: 12px; }

.grip { flex: none; width: 4px; height: 14px; margin: 0 2px 0 3px; background: repeating-linear-gradient(#a9a37c 0 1px, transparent 1px 2px); }
.menu { flex: none; height: 24px; display: flex; align-items: center; }
.menu button { padding: 0 8px; height: 18px; }
.menu .tight { padding: 0 4px; }

.bar { flex: none; height: 24px; display: flex; align-items: center; }
.bar.second { height: 27px; }
.bar > button { width: 23px; height: 22px; display: grid; place-items: center; flex: none; }
.bar > .more { width: 12px; align-items: end; padding-bottom: 3px; }
.sep { flex: none; width: 5px; height: 18px; background: linear-gradient(#c9bf94, #c9bf94) 2px 0 / 1px 100% no-repeat; }
.grip.next { margin-left: 7px; }
.combo { display: flex; flex: none; width: 150px; height: 19px; background: #fff; border: 1px solid #b3ab83; border-radius: 4px; overflow: hidden; }
.combo input { flex: 1; min-width: 0; border: 0; background: none; padding: 0 3px; outline: 0; }
.combo button { width: 15px; display: grid; place-items: center; background: #f6f2df; border-left: 1px solid #b3ab83; }
.combo.wide { width: 200px; border-color: #d9d4bd; }
.combo.wide button { border-color: #d9d4bd; }
.combo.wide .tri { border-top-color: #a9a28a; }

.work { flex: 1; min-height: 0; display: flex; gap: 4px; padding-right: 2px; }
.side { width: 308px; flex: none; display: flex; flex-direction: column; min-height: 0; }
.cap { flex: none; height: 18px; background: #b2b2b2; display: flex; align-items: center; padding: 0 4px; color: #666; }
.cap h2 { flex: 1; }
.pin { width: 4px; height: 6px; border: 1px solid #eee; border-radius: 2px; margin-right: 10px; }
.cap svg { width: 10px; height: 10px; color: #555; }
.acts { flex: none; height: 25px; display: flex; align-items: center; padding: 0 0 2px 4px; }
.acts button { width: 23px; display: grid; place-items: center; }
.acts .drop { width: 62px; display: flex; align-items: center; gap: 4px; }
.acts .tri { border-width: 3px; border-bottom: 0; }
.treebox { flex: 1; min-height: 0; display: grid; grid-template: minmax(0, 1fr) 17px / minmax(0, 1fr) 16px; background: #fff; border: 1px solid #a9a582; }
.tree { margin: 0; padding: 0; list-style: none; color: #000; overflow: hidden; }
.tree li { height: 19px; display: flex; align-items: center; padding-left: 6px; }
.tree .l1 { padding-left: 25px; }
.tree .l2 { padding-left: 44px; }
.tree .l3 { padding-left: 63px; }
.tree i { width: 10px; flex: none; margin-right: 7px; }
.tree i svg { width: 10px; height: 10px; }
.tree span { margin-left: 4px; padding: 0 2px; line-height: 19px; white-space: nowrap; }
.tree .sel { background: #6c94cb; color: #fff; flex: 1; }
.vs { display: flex; flex-direction: column; border-left: 1px solid #a9a582; background: #fbf9ed; }
.sb { height: 20px; flex: none; display: grid; place-items: center; background: #f8f5e3; }
.vs .sb:first-child { border-bottom: 1px solid #c0bb9b; }
.vs .sb:last-child { border-top: 1px solid #c0bb9b; }
.vthumb { flex: 1; margin-top: 146px; border-top: 1px solid #a9a582; background: linear-gradient(90deg, #fbf9eb, #e5dfb9); display: grid; place-items: center; }
.vthumb i, .hthumb i { width: 4px; height: 4px; border-radius: 2px; border: 1px solid #b8b18b; border-right-color: #fff; border-bottom-color: #fff; }
.hs { display: flex; border-top: 1px solid #a9a582; background: #fbf9ed; }
.hs .sb { width: 20px; height: auto; }
.hthumb { flex: 1; border: 1px solid #a9a582; border-width: 0 1px; background: linear-gradient(#fbf9eb, #e5dfb9); display: grid; place-items: center; }
.corner { background: #fffef6; border: 1px solid #a9a582; border-width: 1px 0 0 1px; }
.arr { width: 0; height: 0; border: 4px solid transparent; }
.arr.u { border-bottom: 7px solid #7c7862; border-top: 0; }
.arr.d { border-top: 7px solid #cbc6ac; border-bottom: 0; }
.arr.l { border-right: 7px solid #cbc6ac; border-left: 0; }
.arr.r { border-left: 7px solid #7c7862; border-right: 0; }

.mdi { flex: 1; min-width: 0; display: flex; flex-direction: column; background: #fcfaea; border: 2px solid #77776f; border-right: 1px solid #a9a582; border-bottom: 1px solid #a9a582; margin-bottom: 1px; }
.mcap { flex: none; height: 19px; background: #b2b2b2; border-bottom: 1px solid #8b8b83; display: flex; align-items: center; gap: 4px; padding-right: 1px; color: #666; }
.mcap h2 { flex: 1; padding-left: 2px; }
.mcap button { width: 16px; display: grid; place-items: center; }
.mcap svg { width: 14px; height: 14px; }
.mcap button svg { width: 12px; height: 12px; }
.mcap button .mx { width: 10px; height: 10px; }
.tabs { flex: none; height: 19px; display: flex; align-items: flex-end; gap: 6px; border-bottom: 1px solid #b4ad86; }
.tabs button { height: 18px; padding: 0 9px; background: #e9e5cb; border: 1px solid #c3bd9b; border-bottom: 0; border-radius: 5px 5px 0 0; line-height: 17px; }
.tabs .first { width: 588px; text-align: left; }
.tabs .on { background: #fcfaea; border-top: 2px solid #ecc887; height: 19px; margin-bottom: -1px; border-color: #ecc887 #b4ad86; }
.mbody { flex: 1; min-height: 0; display: flex; gap: 6px; padding: 0 6px 7px 8px; }
.variants { width: 198px; flex: none; display: flex; flex-direction: column; }
.vbtns { height: 33px; flex: none; display: flex; align-items: center; padding-top: 4px; }
.vbtns button { width: 23px; display: grid; place-items: center; }
.box { background: #fff; border: 1px solid #b4ad86; overflow: hidden; }
.grow { flex: 1; }
.grid th { height: 20px; padding: 0 4px; text-align: left; font-weight: normal; background: linear-gradient(#fcfaee, #ece6cb); border-bottom: 1px solid #cfc89f; }
.grid td { height: 19px; padding: 0 4px; color: #000; border-bottom: 1px solid #bdd0e4; }
.settings { flex: 1; min-width: 0; display: flex; flex-direction: column; padding-top: 33px; }
.upper { height: 201px; flex: none; }
.tabs.low { height: 52px; border-bottom: 0; }
.tabs.low button { height: 18px; }
.tabs.low .first { width: 392px; text-align: right; }
.group { flex: 1; min-height: 0; display: flex; gap: 4px; border: 1px solid #b4ad86; padding: 6px 0 6px 6px; }
.struct { width: 233px; flex: none; }
.fields { flex: 1; min-width: 0; }
.fields td { padding: 0; }
.chip { display: block; width: 136px; height: 18px; padding-right: 3px; background: #6c94cb; color: #fff; text-align: right; line-height: 18px; }
.vbar { width: 26px; flex: none; display: flex; flex-direction: column; align-items: center; padding-top: 4px; margin-left: -4px; }
.vbar button { height: 23px; }
.vbar button:first-child { height: 16px; }
.tiny { border-width: 3px; border-right-color: #3a2b00; border-left: 0; margin: 2px 0 0; }

.wintabs { flex: none; height: 23px; padding: 1px 1px 2px; display: flex; gap: 2px; }
.wintabs button { width: 171px; height: 20px; display: flex; align-items: center; gap: 1px; padding: 0 2px 0 1px; background: #b0aeab; border: 1px solid #c1bca9; color: #2d2712; }
.wintabs .cur { background: #aecbe7; border-color: #b4b69f; }
.status { flex: none; height: 20px; display: flex; gap: 5px; }
.status > * { border: 1px solid #d9d3b7; height: 19px; line-height: 18px; padding: 0 3px; }
.status .msg { flex: 1; border-left: 0; }
.status .ind { color: #a69659; width: 29px; text-align: center; padding: 0; }
.status .ind + .ind { width: 33px; }
.status .lang { display: flex; align-items: center; gap: 4px; width: 24px; border-right: 0; padding: 0 2px; }
.lang .tri { border-width: 3px; border-bottom: 0; }
.edge { flex: none; height: 2px; background: #222733; border-bottom: 1px solid #aab7c8; }

.overlay { position: absolute; inset: 0; display: grid; place-items: center; pointer-events: none; padding-bottom: 3px; }
.dialog { position: relative; pointer-events: auto; width: 508px; height: 508px; display: flex; flex-direction: column; background: #fcfaea; border: 3px solid #cbcbcb; outline: 1px solid #858585; outline-offset: -1px; box-shadow: inset 1px 1px #e2e2e2; }
.dcap { flex: none; height: 19px; background: #cbcbcb; color: #2c2c2c; display: flex; align-items: center; gap: 5px; padding: 0 5px 0 1px; }
.dcap h2 { flex: 1; }
.dcap button svg { width: 10px; height: 10px; }
.dcap button { margin-right: 1px; }
fieldset { flex: 1; min-height: 0; margin: 0; border: 0; padding: 0 22px; }
legend { padding: 8px 8px 0; height: 42px; }
.opt { height: 80px; display: flex; align-items: center; margin-bottom: 38px; }
.opt > svg { width: 56px; height: 80px; margin-right: 24px; }
.opt input { appearance: none; flex: none; width: 13px; height: 13px; margin: 0 2px 0 0; border: 1px solid #8b886e; border-radius: 50%; background: #fff; }
.opt input:checked { border-color: #6b8bb9; background: radial-gradient(circle, #222c42 0 2px, #c6d9f1 3px); }
.opt label { line-height: 13px; }
.foc { outline: 1px dotted #222; }
.foot { flex: none; height: 32px; border-top: 1px solid #b4ad86; display: flex; justify-content: flex-end; align-items: center; gap: 5px; padding-right: 6px; }
.foot button { width: 70px; height: 20px; border: 1px solid #aaa380; border-radius: 3px; background: linear-gradient(#fffef6, #ece7cd); color: #3c2d06; }
.foot .def { box-shadow: inset 0 0 0 2px #d8d0a9; }
.foot button:disabled { color: #d3b590; border-color: #d6d0b2; background: #fcfaea; }
.cursor { position: absolute; left: 320px; top: 148px; width: 13px; height: 20px; }
```
